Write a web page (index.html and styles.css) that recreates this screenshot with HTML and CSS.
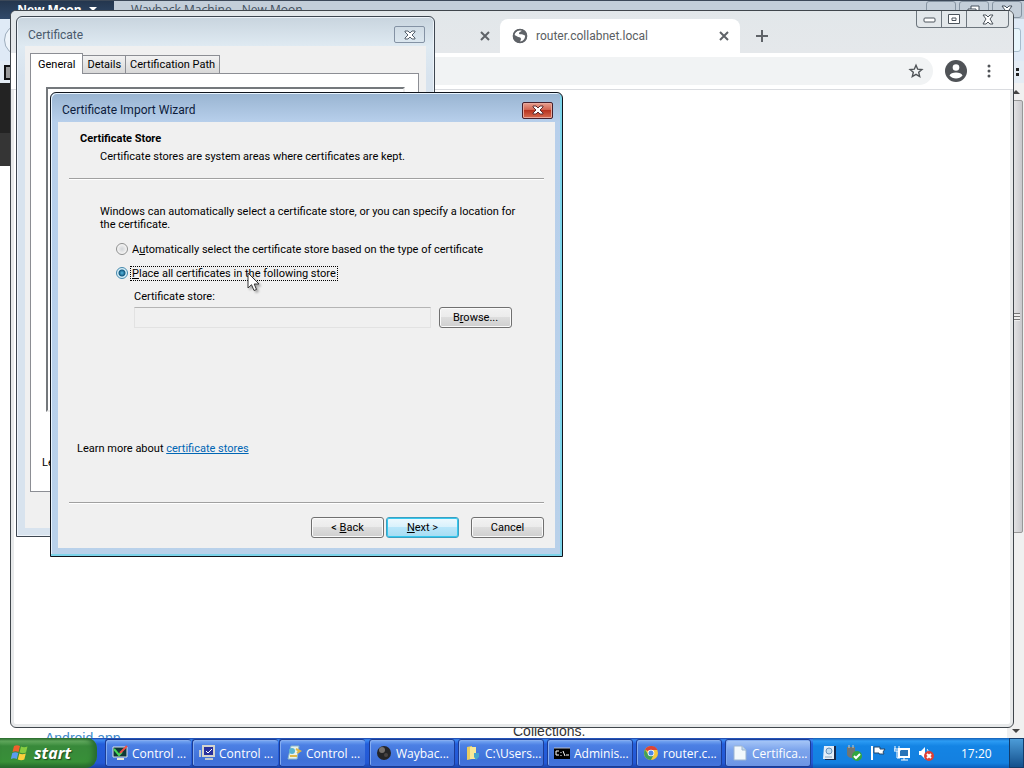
FILE: index.html
```html
<!DOCTYPE html>
<html lang="en">
<head>
    <meta charset="UTF-8">
    <meta name="viewport" content="width=device-width, initial-scale=1.0">
    <title>Certificate Import Wizard</title>
    <link rel="stylesheet" href="styles.css">
</head>
<body>
    <main class="desktop">

        <!-- New Moon browser -->
        <section class="moon">
            <header class="moon-title">
                <button class="moon-menu">New Moon <span class="moon-arrow"></span></button>
                <span class="moon-caption">Wayback Machine - New Moon</span>
                <div class="moon-controls"><i></i><i><svg width="14" height="12" viewBox="0 0 14 12"><path d="M4 4V1h8v7h-2M1 4h8v7H1z" fill="#fff" stroke="#44505c"/></svg></i><i><svg width="12" height="11" viewBox="0 0 12 11"><path d="M1 1h3l2 2 2-2h3L8 5l3 5H8L6 8l-2 2H1l3-5z" fill="#fff" stroke="#44505c"/></svg></i></div>
            </header>
            <div class="moon-toolbar"><span class="moon-back"></span><span class="moon-field"></span></div>
            <div class="moon-bookmarks"><span class="moon-icon"></span><span class="moon-more"></span></div>
            <div class="moon-body">
                <div class="moon-page">
                    <div class="moon-dark"></div>
                    <div class="moon-grey"></div>
                    <div class="moon-text"><a class="moon-link" href="#">Android app</a><span class="moon-coll">Collections.</span></div>
                </div>
                <div class="scrollbar">
                    <span class="arrow-up"></span>
                    <span class="thumb"></span>
                    <span class="arrow-down"></span>
                </div>
            </div>
        </section>

        <!-- Chrome -->
        <section class="chrome">
            <div class="tabstrip">
                <div class="tab-old"><svg class="tab-x" viewBox="0 0 10 10"><path d="M1 1l8 8M9 1L1 9"/></svg></div>
                <div class="tab-active">
                    <svg class="globe" viewBox="0 0 16 16"><circle cx="8" cy="8" r="7" fill="#5f6368"/><path d="M10 2.200C9 4 7.500 3.500 7 5c-.4 1.200 1.200 1.500 2.500 1.200 1.500-.2 2 1 3.700 1.300C13 11 11 13.500 8 13.500c.8-1.500 1.500-2.500.5-3.700C7.300 8.500 5.500 9.500 4 7.800L2.500 7C3 4 6 1.800 10 2.200z" fill="#fff"/><circle cx="8" cy="8" r="6.600" fill="none" stroke="#5f6368" stroke-width="1.500"/></svg>
                    <span class="tab-name">router.collabnet.local</span>
                    <svg class="tab-x" viewBox="0 0 10 10"><path d="M1 1l8 8M9 1L1 9"/></svg>
                </div>
                <button class="new-tab" aria-label="New tab"><svg width="12" height="12" viewBox="0 0 12 12"><path d="M6 0v12M0 6h12" stroke="#5f6368" stroke-width="2"/></svg></button>
                <div class="chrome-controls">
                    <button aria-label="Minimize"><svg width="13" height="7" viewBox="0 0 13 7"><rect x="1" y="2" width="11" height="4" rx="1" fill="#fff" stroke="#4c545c"/></svg></button>
                    <button aria-label="Maximize"><svg width="12" height="11" viewBox="0 0 12 11"><path d="M.5.5h11v9H.5zM4 4h4v2.500H4z" fill="#fff" stroke="#4c545c"/></svg></button>
                    <button class="wide" aria-label="Close"><svg width="12" height="11" viewBox="0 0 12 11"><path d="M1 1h3l2 2 2-2h3L8 5l3 5H8L6 8l-2 2H1l3-5z" fill="#fff" stroke="#4c545c"/></svg></button>
                </div>
            </div>
            <div class="chrome-bar">
                <div class="omnibox">
                    <input type="text" aria-label="Address">
                    <svg width="16" height="16" viewBox="0 0 16 16"><path d="M8 2.200l1.700 4 4.200.3-3.200 2.800 1 4.200L8 11.300l-3.700 2.200 1-4.200L2.100 6.500l4.200-.3z" fill="none" stroke="#4f5357" stroke-width="1.400"/></svg>
                </div>
                <svg class="avatar" width="22" height="22" viewBox="0 0 22 22"><circle cx="11" cy="11" r="11" fill="#505357"/><circle cx="11" cy="7.500" r="3.300" fill="#fff"/><path d="M4.500 15.500c1-4 12-4 13 0-3 4-10 4-13 0z" fill="#fff"/></svg>
                <svg class="dots" width="4" height="14" viewBox="0 0 4 14"><circle cx="2" cy="2" r="1.500"/><circle cx="2" cy="7" r="1.500"/><circle cx="2" cy="12" r="1.500"/></svg>
            </div>
            <div class="chrome-page"></div>
        </section>

        <!-- Certificate properties -->
        <section class="dialog cert">
            <header class="titlebar">
                <h2>Certificate</h2>
                <button class="close" aria-label="Close"><svg width="12" height="10" viewBox="0 0 12 10"><path d="M1 1h3l2 2 2-2h3v1L8 5l3 3v1H8L6 7 4 9H1V8l3-3-3-3z" fill="#fff" stroke="#55606c"/></svg></button>
            </header>
            <div class="cert-content">
                <div class="tabs">
                    <button class="tab selected">General</button><button class="tab">Details</button><button class="tab">Certification Path</button>
                </div>
                <div class="tab-panel">
                    <div class="cert-info"></div>
                    <p>Learn</p>
                </div>
            </div>
        </section>

        <!-- Import wizard -->
        <section class="dialog wizard">
            <header class="titlebar">
                <h2>Certificate Import Wizard</h2>
                <button class="close" aria-label="Close"><svg width="12" height="10" viewBox="0 0 12 10"><path d="M1 1h3l2 2 2-2h3v1L8 5l3 3v1H8L6 7 4 9H1V8l3-3-3-3z" fill="#fff" stroke="#5c2c30"/></svg></button>
            </header>
            <form class="wizard-content" onsubmit="return false">
                <div class="heading">
                    <h3>Certificate Store</h3>
                    <p>Certificate stores are system areas where certificates are kept.</p>
                </div>
                <div class="step">
                    <p class="intro">Windows can automatically select a certificate store, or you can specify a location for the certificate.</p>
                    <div class="choice">
                        <input type="radio" name="store" id="auto">
                        <label for="auto">A<u>u</u>tomatically select the certificate store based on the type of certificate</label>
                    </div>
                    <div class="choice">
                        <input type="radio" name="store" id="place" checked>
                        <label for="place" class="focused"><u>P</u>lace all certificates in the following store</label>
                    </div>
                    <label class="store-label" for="storeName">Certificate store:</label>
                    <div class="store-row">
                        <input type="text" id="storeName" readonly>
                        <button class="btn">B<u>r</u>owse...</button>
                    </div>
                    <p class="learn">Learn more about <a href="#">certificate stores</a></p>
                </div>
                <div class="actions">
                    <button class="btn">&lt; <u>B</u>ack</button>
                    <button class="btn default"><u>N</u>ext &gt;</button>
                    <button class="btn cancel">Cancel</button>
                </div>
            </form>
        </section>

        <svg class="cursor" width="14" height="20" viewBox="0 0 14 20"><path d="M1 1v15l3.500-3.300L7 18.500l2.500-1L7.200 12H12z" fill="#fff" stroke="#333"/></svg>
    </main>

    <footer class="taskbar">
        <button class="start">
            <svg width="18" height="18" viewBox="0 0 18 18"><path d="M3 2c2-1 4-1 6 0L7.500 8c-2-1-4-1-6 0z" fill="#f0602c"/><path d="M10 2.500c2 1 4 1 6.500 0L15 8.500c-2 1-4 1-6.500 0z" fill="#86cc40"/><path d="M1.300 9c2-1 4-1 6 0l-1.500 6c-2-1-4-1-6 0z" fill="#5a9cf0"/><path d="M8.300 9.500c2 1 4 1 6.500 0l-1.500 6c-2 1-4 1-6.500 0z" fill="#fcd03c"/></svg>
            start
        </button>
        <div class="tasks">
            <div class="group">
                <button class="task"><svg viewBox="0 0 16 16"><path d="M1 2h14v10H1z" fill="#103838" stroke="#dce4ec"/><path d="M2 4l5 6 3-3" fill="none" stroke="#48d858" stroke-width="2"/><path d="M8 8l7-7" stroke="#f05048" stroke-width="2"/><path d="M5 14h7" stroke="#e8e8d8" stroke-width="2"/></svg>Control ...</button>
                <button class="task"><svg viewBox="0 0 16 16"><path d="M4 1h11v10H4z" fill="#28309c" stroke="#d4d4cc" stroke-width="2"/><path d="M7 6l2 2 4-4" fill="none" stroke="#fff"/><path d="M1 5v7M6 14h8" stroke="#c0c8d0" stroke-width="2"/></svg>Control ...</button>
                <button class="task"><svg viewBox="0 0 16 16"><path d="M5 1h8l-2 13H2z" fill="#e8f2ec" stroke="#8cb8c8"/><circle cx="6" cy="6" r="3" fill="#58b4d0"/><path d="M4 11h7M10 4l4 2-3 2" stroke="#e0b848" stroke-width="2" fill="none"/></svg>Control ...</button>
            </div>
            <button class="task"><svg viewBox="0 0 16 16"><circle cx="8" cy="8" r="7" fill="#252527"/><circle cx="6" cy="5" r="3" fill="#77726e"/><circle cx="10" cy="10" r="2" fill="#484442"/></svg>Waybac...</button>
            <button class="task"><svg viewBox="0 0 16 16"><path d="M2 2l5-1v13l-5 1z" fill="#e8cc60"/><path d="M5 2h6v12H5z" fill="#f8e898"/><path d="M9 8h5v4l-3 3-2-3z" fill="#48a4cc"/></svg>C:\Users...</button>
            <button class="task"><svg viewBox="0 0 16 16"><path d="M0 3h16v11H0z" fill="#000"/><path d="M0 3h16" stroke="#b8c0d0"/><path d="M5 6H2v4h3M7 7v1M7 10v1M9 6l2 5M12 10h3" fill="none" stroke="#fff"/></svg>Adminis...</button>
            <button class="task"><svg viewBox="0 0 16 16"><circle cx="8" cy="8" r="7" fill="#f4c83c"/><path d="M8 8L2 4.500A7 7 0 0 1 14.500 5H8z" fill="#dc4438"/><path d="M2 4.500A7 7 0 0 0 8 15l2.500-5L5 9z" fill="#42a058"/><circle cx="8" cy="8" r="3.300" fill="#fff"/><circle cx="8" cy="8" r="2.500" fill="#4c88e8"/></svg>router.c...</button>
            <button class="task active"><svg viewBox="0 0 16 16"><path d="M2 1h8l4 4v10H2z" fill="#f2f8fc" stroke="#9cb4d0"/><path d="M10 1v4h4" fill="#c4daec" stroke="#9cb4d0"/></svg>Certifica...</button>
        </div>
        <div class="tray">
            <svg viewBox="0 0 16 16"><path d="M3 1h11v14H3z" fill="#182848"/><path d="M2 1h10v13H1z" fill="#e4eef8"/><circle cx="7" cy="6" r="3" fill="#c0dcf0" stroke="#6890b8"/><path d="M3 12h7" stroke="#88a4bc"/></svg>
            <svg viewBox="0 0 16 16"><path d="M1 2h8v8c-1 4-6 4-8 0z" fill="#727672"/><path d="M3 0v3M7 0v3" stroke="#c8ccc8"/><circle cx="11" cy="11" r="5" fill="#32a640"/><path d="M8 11l2 2 4-4" fill="none" stroke="#fff" stroke-width="2"/></svg>
            <svg viewBox="0 0 16 16"><path d="M2 1v14" stroke="#fff" stroke-width="2"/><path d="M4 2h6v2h5l-2 3 1 2H9V8H4z" fill="#fff" stroke="#24486c"/></svg>
            <svg viewBox="0 0 16 16"><path d="M5 4h10v8H5z" fill="#2874b8" stroke="#fff" stroke-width="2"/><path d="M7 15h7M10 12v3M3 6v7h3M1 1v3M5 1v3M0 4h6v2H0z" fill="none" stroke="#fff"/></svg>
            <svg viewBox="0 0 16 16"><path d="M1 6h2l4-4v12l-4-4H1z" fill="#fff"/><path d="M9 4c1 1 1 2 1 3" stroke="#fff" fill="none"/><circle cx="11" cy="11" r="5" fill="#dc4038"/><path d="M9 9l4 4M13 9l-4 4" stroke="#fff" stroke-width="2"/></svg>
            <span class="clock">17:20</span>
        </div>
        <button class="show-desktop" aria-label="Show desktop"></button>
    </footer>
</body>
</html>
```
FILE: styles.css
```css
* {
    box-sizing: border-box;
}
body {
    margin: 0;
    height: 100vh;
    display: flex;
    flex-direction: column;
    overflow: hidden;
    font-family: Roboto, "Noto Sans", sans-serif;
    font-size: 11px;
    line-height: 13px;
    color: #000;
}
h2, h3, p {
    margin: 0;
    font-size: 11px;
}
button, input {
    font: inherit;
    color: inherit;
    margin: 0;
    padding: 0;
}
svg {
    flex: none;
    display: block;
}
.desktop {
    flex: 1;
    position: relative;
    overflow: hidden;
    background: #fff;
}

/* New Moon */
.moon {
    height: 100%;
    display: flex;
    flex-direction: column;
    background: #dfeaf6;
    border-top: 1px solid #3c4858;
}
.moon-title {
    display: flex;
    height: 18px;
    background: #c3ced9;
    font-family: "Open Sans", sans-serif;
    font-size: 12px;
    line-height: 18px;
    overflow: hidden;
}
.moon-menu {
    width: 114px;
    border: 0;
    background: linear-gradient(#24364e, #30496a);
    color: #fff;
    font-weight: bold;
}
.moon-arrow {
    display: inline-block;
    margin: 0 0 4px 4px;
    border: 4px solid transparent;
    border-top-color: #fff;
    border-bottom: 0;
    vertical-align: middle;
}
.moon-caption {
    flex: 1;
    padding-left: 17px;
    color: #42505e;
}
.moon-controls {
    display: flex;
    gap: 3px;
    padding-right: 2px;
}
.moon-controls i {
    width: 30px;
    height: 17px;
    display: flex;
    justify-content: center;
    padding-top: 3px;
    border: 1px solid #8694a2;
    border-radius: 3px;
}
.moon-toolbar {
    height: 42px;
    display: flex;
    justify-content: space-between;
    align-items: center;
}
.moon-back {
    width: 32px;
    height: 32px;
    margin-left: 4px;
    border: 1px solid #9cacbc;
    border-radius: 50%;
    background: #eef4fa;
}
.moon-field {
    width: 40px;
    height: 24px;
    margin-right: 3px;
    border: 1px solid #a8bccc;
    border-radius: 3px;
    background: #e8f6fc;
}
.moon-bookmarks {
    height: 22px;
    display: flex;
    justify-content: space-between;
    align-items: center;
    background: #e4ecf4;
}
.moon-icon {
    width: 12px;
    height: 15px;
    margin-left: 4px;
    border: 2px solid #111;
    background: #999;
}
.moon-more {
    width: 3px;
    height: 8px;
    margin-right: 5px;
    border-top: 3px solid #222;
    border-bottom: 3px solid #222;
}
.moon-body {
    flex: 1;
    display: flex;
    min-height: 0;
    background: #fff;
}
.moon-page {
    flex: 1;
    display: flex;
    flex-direction: column;
}
.moon-dark {
    height: 50px;
    background: #232323;
}
.moon-grey {
    height: 33px;
    background: #353535;
}
.moon-text {
    display: flex;
    margin-top: auto;
    height: 17px;
    padding-left: 45px;
    font-family: "Liberation Sans", Arial, sans-serif;
    font-size: 14px;
    line-height: 20px;
    color: #333;
}
.moon-link {
    width: 468px;
    padding-top: 7px;
    color: #428bca;
    text-decoration: none;
}
.scrollbar {
    width: 17px;
    display: flex;
    flex-direction: column;
    align-items: center;
    justify-content: space-between;
    background: #f0f0f0;
}
.arrow-up {
    margin: 7px 0 6px;
    border: 4px solid transparent;
    border-top: 0;
    border-bottom-color: #444;
}
.arrow-down {
    margin: 5px 0;
    border: 4px solid transparent;
    border-bottom: 0;
    border-top-color: #444;
}
.thumb {
    width: 15px;
    height: 433px;
    margin-bottom: auto;
    border: 1px solid #989898;
    border-radius: 2px;
    background: repeating-linear-gradient(#777 0 1px, #eee 1px 3px) center / 8px 8px no-repeat, linear-gradient(90deg, #f2f2f2, #c8c8cc);
}

/* Chrome */
.chrome {
    position: absolute;
    inset: 10px 10px 10px 10px;
    display: flex;
    flex-direction: column;
    border: 1px solid #40464c;
    border-radius: 6px;
    background: #fff;
    overflow: hidden;
    box-shadow: inset 0 0 0 3px #e7e9ea;
}
.tabstrip {
    height: 42px;
    display: flex;
    align-items: center;
    padding-top: 8px;
    background: linear-gradient(#e2e7ea, #e5e8eb);
}
.tab-old {
    width: 489px;
    display: flex;
    justify-content: flex-end;
    padding-right: 10px;
}
.tab-active {
    width: 240px;
    height: 34px;
    display: flex;
    align-items: center;
    gap: 8px;
    padding: 0 11px 0 12px;
    border-radius: 8px 8px 0 0;
    background: #fff;
    font-size: 12px;
}
.tab-name {
    flex: 1;
    color: #5a5e62;
}
.tab-x {
    width: 10px;
    height: 10px;
    fill: none;
    stroke: #5f6368;
    stroke-width: 2;
}
.globe {
    width: 16px;
    height: 16px;
}
.new-tab {
    width: 28px;
    height: 28px;
    margin-left: 8px;
    display: flex;
    align-items: center;
    justify-content: center;
    border: 0;
    background: none;
}
.chrome-controls {
    align-self: flex-start;
    display: flex;
    height: 17px;
    margin: -8px 4px 0 auto;
    border: 1px solid #6c757d;
    border-top: 0;
    border-radius: 0 0 4px 4px;
}
.chrome-controls button {
    width: 25px;
    display: flex;
    align-items: center;
    justify-content: center;
    border: 0;
    border-right: 1px solid #6c757d;
    background: none;
}
.chrome-controls .wide {
    width: 41px;
    border: 0;
}
.chrome-bar {
    height: 37px;
    display: flex;
    align-items: center;
    padding: 0 22px 0 80px;
    border-bottom: 1px solid #dadce0;
    background: #fff;
}
.omnibox {
    flex: 1;
    display: flex;
    align-items: center;
    height: 28px;
    padding-right: 9px;
    border-radius: 14px;
    background: #f1f3f4;
}
.omnibox input {
    flex: 1;
    border: 0;
    background: none;
}
.avatar {
    margin: 0 20px 0 12px;
}
.dots {
    fill: #505357;
}
.chrome-page {
    flex: 1;
}

/* Dialog windows */
.dialog {
    position: absolute;
    display: flex;
    flex-direction: column;
    border: 1px solid #3e4650;
    border-radius: 6px 6px 0 0;
}
.titlebar {
    display: flex;
    align-items: center;
    justify-content: space-between;
    height: 29px;
    padding: 6px 1px 0 3px;
}
.titlebar h2 {
    font-size: 12px;
    font-weight: normal;
    line-height: 18px;
}
.close {
    width: 31px;
    height: 17px;
    display: flex;
    align-items: center;
    justify-content: center;
    border: 1px solid #8492a4;
    border-radius: 2px;
    background: none;
}
.cert {
    left: 16px;
    top: 16px;
    width: 419px;
    height: 521px;
    padding: 0 8px 8px;
    background: linear-gradient(#c8d4de, #dfeaf2 29px, #d8e3ee 60px);
    box-shadow: inset 0 0 0 1px #eef4fa;
}
.cert .titlebar h2 {
    color: #4a5a6c;
}
.cert-content {
    flex: 1;
    display: flex;
    flex-direction: column;
    padding: 7px 7px 36px 5px;
    background: #f0f0f0;
}
.tabs {
    display: flex;
    align-items: flex-end;
    height: 20px;
}
.tab {
    height: 18px;
    padding: 0 4px;
    border: 1px solid #8c8e94;
    border-bottom: 0;
    border-left: 0;
    background: linear-gradient(#f2f2f2, #d8d8d8);
    white-space: nowrap;
}
.tab.selected {
    height: 21px;
    margin-bottom: -1px;
    padding: 0 7px;
    border-left: 1px solid #8c8e94;
    background: #fff;
    z-index: 1;
}
.tab-panel {
    flex: 1;
    display: flex;
    flex-direction: column;
    padding: 13px 13px 22px 15px;
    border: 1px solid #8c8e94;
    background: #fff;
}
.cert-info {
    flex: 1;
    margin-bottom: 44px;
    border: 2px solid #74787c;
    border-right-color: #eee;
    border-bottom-color: #eee;
}
.tab-panel p {
    margin-left: -4px;
}
.wizard {
    left: 50px;
    top: 92px;
    width: 513px;
    height: 465px;
    padding: 0 7px 8px;
    border-color: #10141c;
    background: linear-gradient(#99b4d1, #b7cfeb 29px, #b9d1ea);
    box-shadow: inset -2px -2px 0 #7cd4ea, inset 1px 1px 0 #e8f4ff;
}
.wizard .titlebar {
    padding: 5px 2px 0 4px;
}
.wizard .titlebar h2 {
    color: #0c1c3c;
}
.wizard .close {
    border-color: #46202c;
    background: linear-gradient(#e8a090, #d0604c 48%, #b83420 50%, #d86c50);
    box-shadow: inset 0 0 0 1px #e8a79b;
}
.wizard-content {
    flex: 1;
    display: flex;
    flex-direction: column;
    padding: 10px 11px;
    background: #f0f0f0;
}
.heading {
    height: 47px;
    padding-left: 11px;
    border-bottom: 1px solid #a0a0a0;
    box-shadow: 0 1px 0 #fff;
}
.heading p {
    margin: 5px 0 0 20px;
}
.step {
    flex: 1;
    padding: 26px 24px 0 31px;
    border-bottom: 1px solid #a0a0a0;
    box-shadow: 0 1px 0 #fff;
}
.intro {
    margin-bottom: 11px;
}
.choice {
    display: flex;
    align-items: center;
    height: 14px;
    margin: 0 0 10px 16px;
    white-space: nowrap;
}
.choice input {
    appearance: none;
    width: 12px;
    height: 12px;
    margin-right: 2px;
    border: 1px solid #8e8f8f;
    border-radius: 50%;
    background: radial-gradient(#d2d5d8, #eee 4px, #f8f8f8 5px);
}
.choice input:checked {
    border-color: #4488ac;
    background: radial-gradient(circle, #58b8e0, #115880 3px, #d8f0fa 4px);
}
.choice label {
    padding: 0 1px;
    border: 1px solid transparent;
}
.choice .focused {
    border: 1px dotted #000;
}
.store-label {
    display: block;
    margin-left: 34px;
}
.store-row {
    display: flex;
    justify-content: space-between;
    gap: 8px;
    margin: 4px 8px 0 34px;
}
.store-row input {
    flex: 1;
    min-width: 0;
    border: 1px solid #e2e2e2;
    border-top-color: #b4b4b4;
    background: #f0f0f0;
}
.btn {
    width: 73px;
    height: 21px;
    border: 1px solid #707070;
    border-radius: 3px;
    background: linear-gradient(#f2f2f2, #ebebeb 49%, #dddddd 50%, #cfcfcf);
    box-shadow: inset 0 0 0 1px #fafafa;
}
.btn.default {
    border-color: #3c9fc1;
    background: linear-gradient(#eef9fe, #d8f1fc 49%, #b8e6fa 50%, #a6dcf2);
    box-shadow: inset 0 0 0 1px #35c8ee;
}
.learn {
    margin: 114px 0 0 -23px;
}
.learn a {
    color: #0066b4;
}
.actions {
    display: flex;
    justify-content: flex-end;
    gap: 2px;
    padding-top: 14px;
}
.btn.cancel {
    margin-left: 10px;
}
.cursor {
    position: absolute;
    left: 247px;
    top: 272px;
    filter: drop-shadow(2px 2px 1px rgba(0,0,0,0.3));
}

/* Taskbar */
.taskbar {
    height: 30px;
    display: flex;
    background: linear-gradient(#1941a5, #3f8cf3 2px, #245edb 6px, #2358d4 25px, #1941a5);
    font-family: "Open Sans", sans-serif;
    font-size: 12px;
    color: #fff;
}
.start {
    width: 97px;
    display: flex;
    align-items: center;
    gap: 5px;
    padding-left: 11px;
    border: 0;
    border-radius: 0 10px 12px 0;
    background: linear-gradient(#2c6c2c, #64ac60 3px, #38893a 8px, #389038 24px, #24682a);
    box-shadow: inset -4px 0 5px #286c30;
    font-size: 16px;
    font-weight: bold;
    font-style: italic;
    text-shadow: 1px 1px 1px #1c4820;
}
.tasks {
    flex: 1;
    display: flex;
    gap: 3px;
    padding: 1px 0 0 8px;
}
.group {
    display: flex;
    gap: 1px;
    margin-right: 1px;
}
.task {
    width: 86px;
    height: 28px;
    display: flex;
    align-items: center;
    gap: 4px;
    padding-left: 6px;
    border: 1px solid #1c3c94;
    border-radius: 3px;
    background: linear-gradient(#7cacf4, #4c80e4 5px, #3e70d8 20px, #4474dc);
    box-shadow: inset 1px 1px 0 #84acf0;
    white-space: nowrap;
}
.group .task {
    border-right-width: 0;
}
.task svg {
    width: 16px;
    height: 16px;
}
.task.active {
    background: linear-gradient(#a8c8f8, #7ca4ec 10px, #6c94e4);
}
.tray {
    width: 196px;
    display: flex;
    align-items: center;
    gap: 8px;
    padding-left: 9px;
    background: linear-gradient(#1460b8, #2c9cf4 3px, #1484e4 8px, #1480e0 25px, #0c5cb8);
}
.tray svg {
    width: 16px;
    height: 16px;
}
.clock {
    margin-left: 19px;
}
.show-desktop {
    width: 15px;
    border: 1px solid #123c6c;
    background: linear-gradient(#4c9cd8, #14508c);
}
```
